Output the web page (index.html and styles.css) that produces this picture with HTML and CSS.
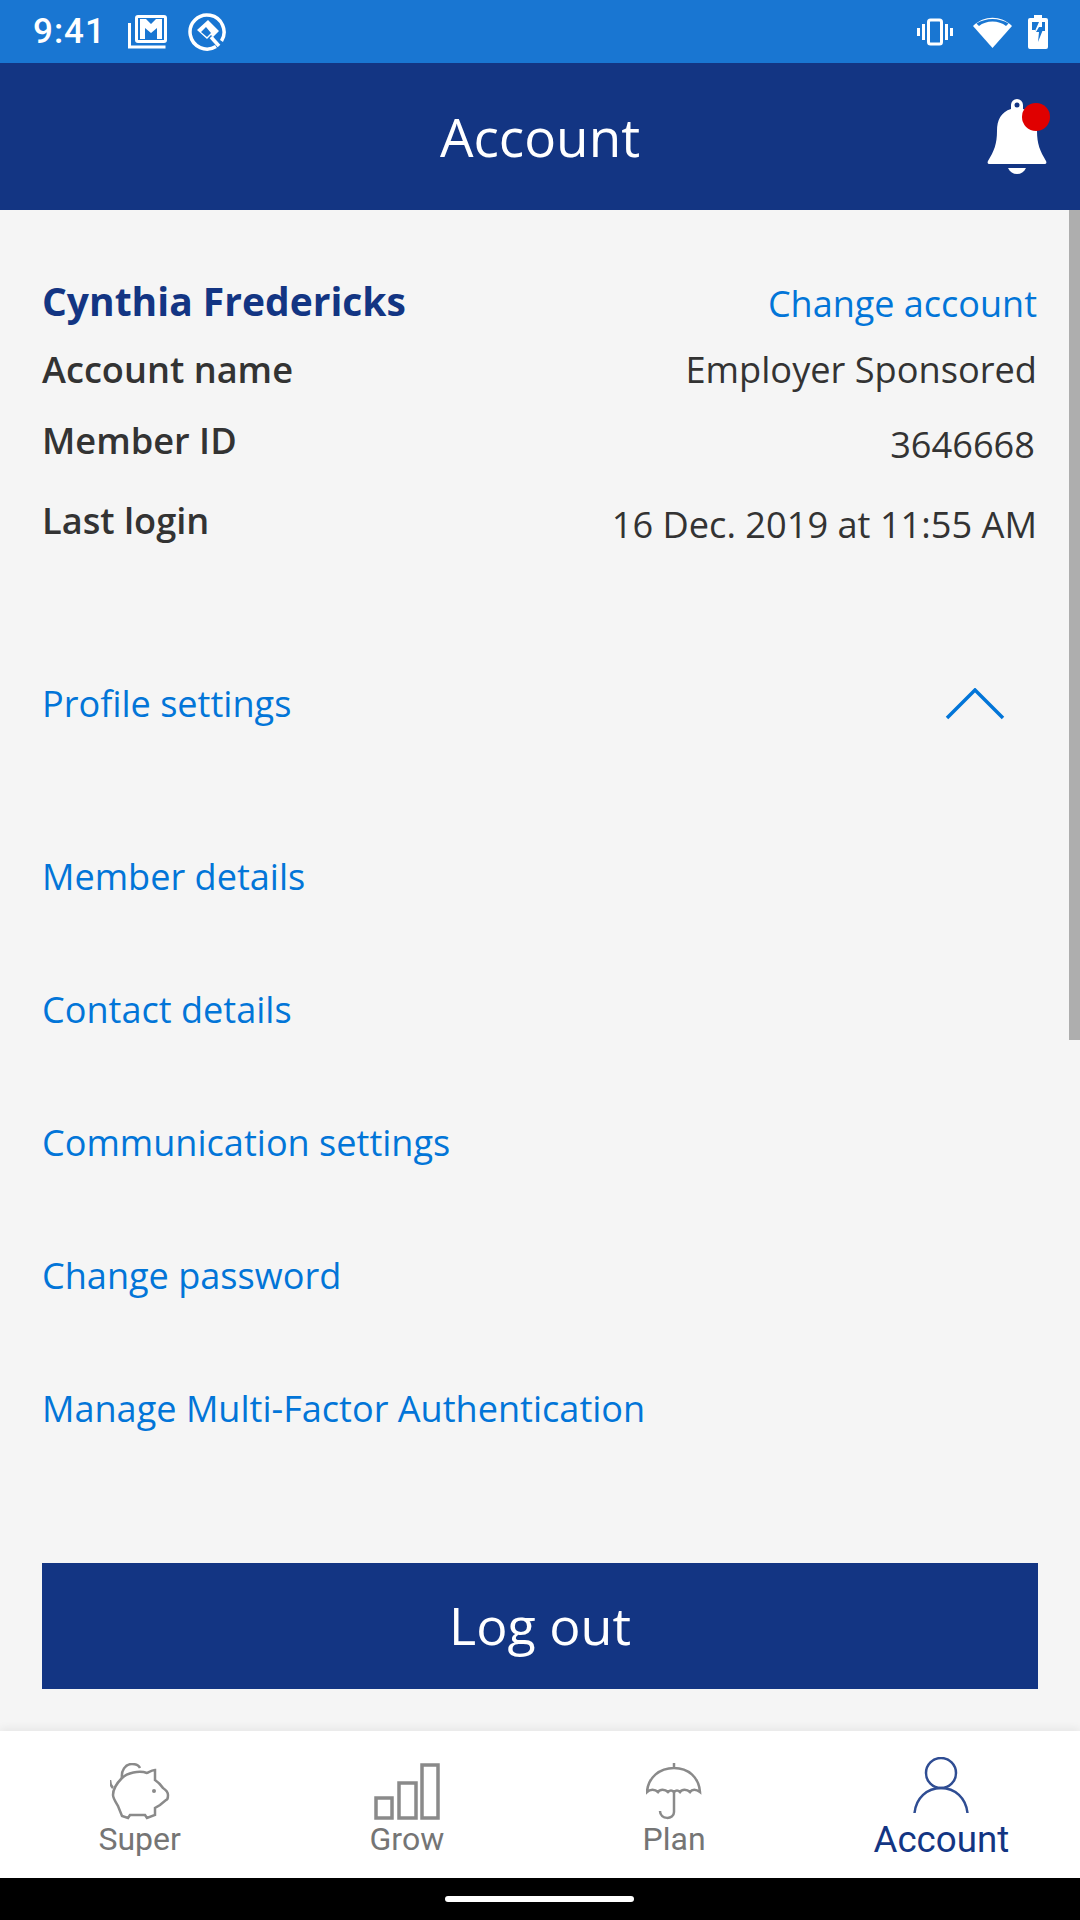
FILE: index.html
```html
<!DOCTYPE html>
<html>
<head lang="en">
    <meta charset="UTF-8">
    <title>Account</title>
    <link rel="stylesheet" href="styles.css">
</head>
<body>
<div class="screen">
    <div class="statusbar">
        <span class="clock">9:41</span>
        <svg class="st-mail" width="40" height="34" viewBox="0 0 40 34">
            <path d="M1.500 8v24h36" fill="none" stroke="#fff" stroke-width="3"/>
            <rect x="8.500" y="1.500" width="29" height="25" rx="1.500" fill="none" stroke="#fff" stroke-width="3"/>
            <path d="M12 4h6l5 5 5-5h6v20h-5v-11l-6 5-6-5v11h-5z" fill="#fff"/>
        </svg>
        <svg class="st-q" width="38" height="38" viewBox="0 0 38 38">
            <path d="M28 33.500A17 17 0 1 1 33.500 28" fill="none" stroke="#fff" stroke-width="3.500"/>
            <path d="M20 7l11 11-6 6-2-2-4 4-10-9z M18 14l-5 5 6 5 4-4z" fill="#fff" fill-rule="evenodd"/>
            <path d="M23 24l8 9" stroke="#fff" stroke-width="3.500"/>
        </svg>
        <span class="st-gap"></span>
        <svg class="st-vib" width="36" height="28" viewBox="0 0 36 28">
            <rect x="11.500" y="2" width="13" height="24" rx="2" fill="none" stroke="#fff" stroke-width="3"/>
            <path d="M6.500 6v16M29.500 6v16M1.500 10v8M34.500 10v8" stroke="#fff" stroke-width="3"/>
        </svg>
        <svg class="st-wifi" width="39" height="34" viewBox="0 0 39 34">
            <path d="M19.500 33L0 11C11 0 28 0 39 11z" fill="#fff"/>
            <path d="M6 11C13 5 26 5 33 11L35.500 8.500C26 2.500 13 2.500 3.500 8.500z" fill="#1976d2"/>
        </svg>
        <svg class="st-batt" width="20" height="34" viewBox="0 0 20 34">
            <path d="M6 0h8v3h4a2 2 0 0 1 2 2v27a2 2 0 0 1-2 2H2a2 2 0 0 1-2-2V5a2 2 0 0 1 2-2h4z" fill="#fff"/>
            <path d="M4 7h7l-4 9v-1H4zM14 7h3v9h-3zM11 12h5l-6 15 1-10H8z" fill="#1976d2"/>
        </svg>
    </div>

    <header class="appbar">
        <h1>Account</h1>
        <div class="bell">
            <svg width="60" height="76" viewBox="0 0 60 76">
                <path d="M24 6a6 6 0 0 1 12 0v4c10 3 14 11 14 22 0 13 3 20 9 30 1 2 0 3-2 3H3c-2 0-3-1-2-3 6-10 9-17 9-30 0-11 4-19 14-22z" fill="#fff"/>
                <circle cx="30" cy="6" r="2.500" fill="#133583"/>
                <path d="M21 69h18c-2 4-5 6-9 6s-7-2-9-6z" fill="#fff"/>
            </svg>
            <span class="dot"></span>
        </div>
    </header>

    <main class="content">
        <span class="scrollthumb"></span>
        <div class="row row-name">
            <h2>Cynthia Fredericks</h2>
            <a class="link">Change account</a>
        </div>
        <div class="row row-account">
            <strong>Account name</strong>
            <span>Employer Sponsored</span>
        </div>
        <div class="row row-low row-member">
            <strong>Member ID</strong>
            <span class="value-id">3646668</span>
        </div>
        <div class="row row-low row-login">
            <strong>Last login</strong>
            <span>16 Dec. 2019 at 11:55 AM</span>
        </div>

        <div class="row row-profile">
            <a class="link">Profile settings</a>
            <svg class="chevron" width="60" height="32" viewBox="0 0 60 32">
                <path d="M2 30L30 2l28 28" fill="none" stroke="#0275d8" stroke-width="3.500"/>
            </svg>
        </div>

        <ul class="links">
            <li><a class="link">Member details</a></li>
            <li><a class="link">Contact details</a></li>
            <li><a class="link">Communication settings</a></li>
            <li><a class="link">Change password</a></li>
            <li><a class="link">Manage Multi-Factor Authentication</a></li>
        </ul>

        <button class="logout">Log out</button>
    </main>

    <nav class="tabbar">
        <div class="tab">
            <svg width="60" height="57" viewBox="0 0 60 57" fill="none" stroke="#8a8a8a" stroke-width="2.500">
                <path d="M12 15C17 10 29 7 37 10c2-1 5-3 8-3v10c3 2 6 5 8 8 3 2 5 4 5 7 0 3-1 5-2 5l-6 5-5 3v7l-8 3-2-3H20l-2 3-6-2-4-10C5 38 3 35 3 32 3 26 7 20 12 15z"/>
                <path d="M12 15C11 8 15 1 22 1c4 0 7 2 8 4"/>
                <path d="M0 17c0 4 1 6 3 8"/>
                <circle cx="44" cy="28" r="2" fill="#8a8a8a" stroke="none"/>
            </svg>
            <span>Super</span>
        </div>
        <div class="tab">
            <svg width="66" height="57" viewBox="0 0 66 57" fill="none" stroke="#8a8a8a" stroke-width="3.500">
                <rect x="2" y="35" width="16" height="20"/>
                <rect x="25" y="20" width="17" height="35"/>
                <rect x="48" y="2" width="16" height="53"/>
            </svg>
            <span>Grow</span>
        </div>
        <div class="tab">
            <svg width="56" height="57" viewBox="0 0 56 57" fill="none" stroke="#8a8a8a" stroke-width="2.500">
                <path d="M28 0v5M1 29C2 14 14 5 28 5s25 9 26 24c-4-3-8-3-10 0-3-3-8-3-10 0-2-2-4-2-6 0-2-2-4-2-6 0-3-3-8-3-10 0-3-3-8-3-11 0z"/>
                <path d="M28 29v20c0 8-14 8-14-1"/>
            </svg>
            <span>Plan</span>
        </div>
        <div class="tab tab-active">
            <svg width="56" height="58" viewBox="0 0 56 58" fill="none" stroke="#2f4d93" stroke-width="2.500">
                <circle cx="28" cy="16" r="15"/>
                <path d="M1.500 56C3 41 14 31 28 31s25 10 26.500 25"/>
            </svg>
            <span>Account</span>
        </div>
    </nav>

    <div class="navbar"><span class="pill"></span></div>
</div>
</body>
</html>
```

FILE: styles.css
```css
* {
    box-sizing: border-box;
}

body {
    margin: 0;
    font-family: "Open Sans", sans-serif;
    color: #333;
}

.screen {
    width: 1080px;
    height: 1920px;
    display: flex;
    flex-direction: column;
    overflow: hidden;
    background: #f5f5f5;
}

/* status bar */
.statusbar {
    height: 63px;
    display: flex;
    align-items: center;
    padding: 0 32px 0 33px;
    background: #1976d2;
}

.clock {
    font-family: Roboto, sans-serif;
    font-size: 35px;
    font-weight: 500;
    color: #fff;
    letter-spacing: 1px;
}

.st-mail {
    margin-left: 22px;
}

.st-q {
    margin-left: 20px;
}

.st-gap {
    flex: 1;
}

.st-wifi {
    margin-left: 20px;
}

.st-batt {
    margin-left: 16px;
}

/* app bar */
.appbar {
    position: relative;
    height: 147px;
    display: flex;
    align-items: center;
    justify-content: center;
    background: #133583;
}

.appbar h1 {
    margin: 0;
    font-size: 53px;
    font-weight: 400;
    color: #fff;
}

.bell {
    position: absolute;
    top: 36px;
    right: 33px;
    width: 60px;
    height: 76px;
}

.dot {
    position: absolute;
    top: 4px;
    right: -3px;
    width: 28px;
    height: 28px;
    border-radius: 50%;
    background: #e00000;
}

/* content */
.content {
    position: relative;
    flex: 1;
    padding: 0 42px;
}

.scrollthumb {
    position: absolute;
    top: 0;
    right: 0;
    width: 11px;
    height: 830px;
    background: #aeaeae;
}

.row {
    display: flex;
    justify-content: space-between;
    align-items: center;
    padding-right: 1px;
    font-size: 36.2px;
    line-height: 48px;
}

.row strong {
    font-weight: 600;
}

.row-name {
    height: 48px;
    margin-top: 67px;
}

.row-name h2 {
    margin: 0;
    font-size: 39px;
    font-weight: 700;
    color: #133583;
}

.row-name .link {
    margin-top: 5px;
    font-size: 36px;
}

.row-account {
    margin-top: 20px;
}

/* value sits a little lower than its label on these rows */
.row-low {
    align-items: flex-start;
}

.row-low span {
    padding-top: 4px;
}

.row-member {
    margin-top: 23px;
}

.row-login {
    margin-top: 28px;
}

.value-id {
    margin-right: 2px;
}

.link {
    color: #0275d8;
    font-size: 36.1px;
}

.row-profile {
    margin-top: 131px;
}

.chevron {
    margin-top: 2px;
    margin-right: 32px;
}

.links {
    margin: 0;
    padding: 0;
    list-style: none;
}

.links li {
    height: 133px;
    display: flex;
    align-items: center;
    line-height: 48px;
}

.links li:first-child {
    margin-top: 82px;
}

.logout {
    display: block;
    width: 100%;
    height: 126px;
    margin-top: 89px;
    padding-bottom: 4px;
    border: 0;
    background: #133583;
    color: #fff;
    font-family: "Open Sans", sans-serif;
    font-size: 52px;
}

/* tab bar */
.tabbar {
    height: 147px;
    display: grid;
    grid-template-columns: repeat(4, 1fr);
    padding: 0 5px 0 6px;
    background: #fff;
    box-shadow: 0 -3px 8px rgba(0, 0, 0, .06);
}

.tab {
    display: flex;
    flex-direction: column;
    align-items: center;
    padding-top: 32px;
    font-family: Roboto, sans-serif;
    font-size: 32px;
    line-height: 34px;
    color: #757575;
}

.tab svg {
    margin-bottom: 2px;
    filter: blur(.6px);
}

.tab-active {
    padding-top: 26px;
    font-size: 36.7px;
    line-height: 40px;
    color: #133583;
}

.tab-active svg {
    margin-bottom: 5px;
}

.navbar {
    height: 42px;
    display: flex;
    align-items: center;
    justify-content: center;
    background: #000;
}

.pill {
    width: 189px;
    height: 6px;
    margin-right: 2px;
    border-radius: 3px;
    background: #fff;
}
```
